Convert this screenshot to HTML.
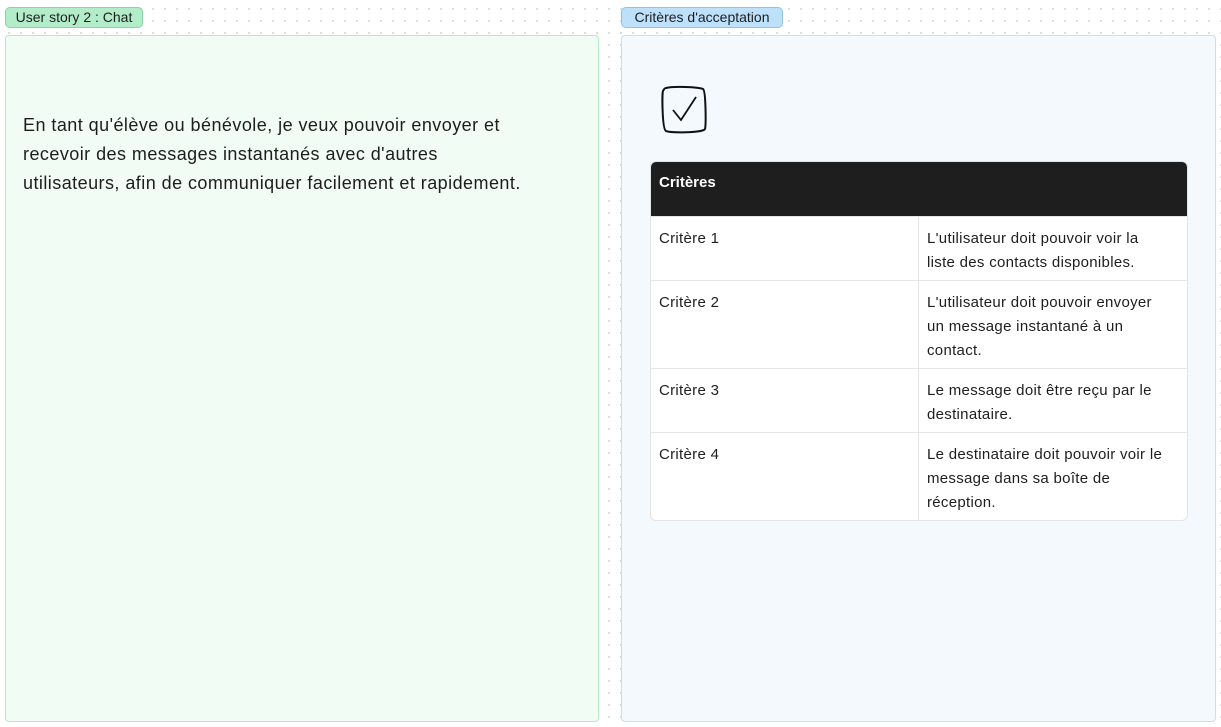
<!DOCTYPE html>
<html><head><meta charset="utf-8"><style>
*{box-sizing:border-box;margin:0;padding:0}
body{width:1221px;height:727px;overflow:hidden;position:relative;font-family:"Liberation Sans",sans-serif;color:#1e1e1e;
background-color:#fff;background-image:radial-gradient(circle,#d6d6d6 0.8px,transparent 1.2px);background-size:12px 12px;background-position:3px 3px}
.lbl{position:absolute;top:7px;height:21px;border-radius:5px;font-size:14px;line-height:19px;text-align:center;border:1px solid;white-space:nowrap}
.panel{position:absolute;top:35px;height:687px;border-radius:4px;border:1px solid}
.txt{position:absolute;left:17px;top:75px;font-size:18px;line-height:29px;width:570px;color:#1e1e1e;white-space:nowrap;letter-spacing:0.45px}
table{position:absolute;left:650px;top:161px;width:538px;border-collapse:separate;border-spacing:0;font-size:15px;background:#fff;border:1px solid #e3e3e3;border-radius:6px;overflow:hidden;white-space:nowrap}
th{background:#1e1e1e;color:#fff;text-align:left;height:54px;padding:12px 8px 0;vertical-align:top;font-weight:bold}
td{vertical-align:top;padding:10px 8px 5px;line-height:24px;border-top:1px solid #e6e6e6;letter-spacing:0.3px}
td:first-child{width:268px;border-right:1px solid #e6e6e6}
</style></head><body>
<div class="lbl" style="left:5px;width:138px;background:#b3ecc8;border-color:#7fd9a0">User story 2 : Chat</div>
<div class="lbl" style="left:621px;width:162px;background:#bde0fb;border-color:#8cc4ef">Critères d'acceptation</div>
<div class="panel" style="left:5px;width:594px;background:#f1fcf4;border-color:#b5ecc6">
<div class="txt">En tant qu'élève ou bénévole, je veux pouvoir envoyer et<br>recevoir des messages instantanés avec d'autres<br>utilisateurs, afin de communiquer facilement et rapidement.</div></div>
<div class="panel" style="left:621px;width:595px;background:#f4f9fe;border-color:#c6dff3"></div>
<svg style="position:absolute;left:660px;top:85px" width="48" height="50" viewBox="0 0 48 50"><path d="M6 3 C14 1 38 2 43 4 C46 6 46 40 45 44 C43 48 10 48 6 46 C2 44 2 8 3 6 C4 4 5 3 6 3Z" fill="none" stroke="#111" stroke-width="2"/><path d="M13 25 L21 35 L36 12" fill="none" stroke="#111" stroke-width="1.8"/></svg>
<table>
<tr><th colspan="2">Critères</th></tr>
<tr><td>Critère 1</td><td>L'utilisateur doit pouvoir voir la<br>liste des contacts disponibles.</td></tr>
<tr><td>Critère 2</td><td>L'utilisateur doit pouvoir envoyer<br>un message instantané à un<br>contact.</td></tr>
<tr><td>Critère 3</td><td>Le message doit être reçu par le<br>destinataire.</td></tr>
<tr><td>Critère 4</td><td>Le destinataire doit pouvoir voir le<br>message dans sa boîte de<br>réception.</td></tr>
</table>
</body></html>
